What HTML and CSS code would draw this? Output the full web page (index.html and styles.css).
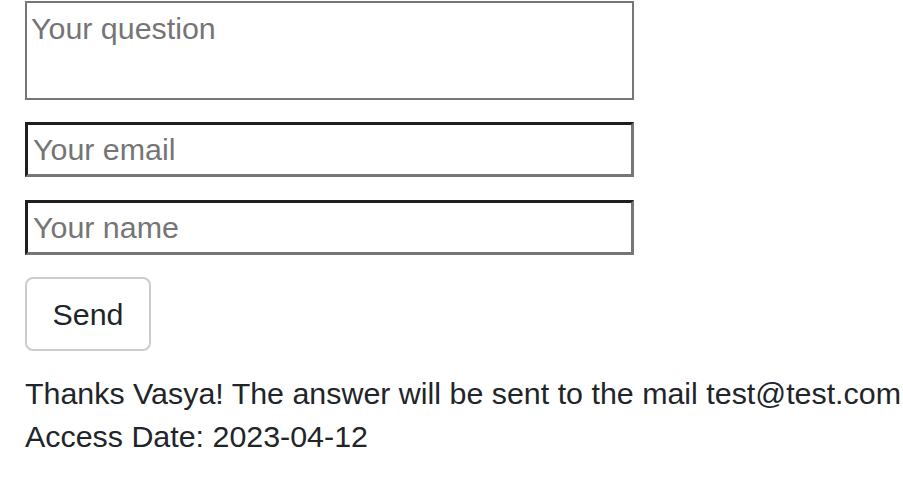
FILE: index.html
```html
<!DOCTYPE html>
<html>
<head>
<meta charset="utf-8">
<link rel="stylesheet" href="styles.css">
</head>
<body>
<form class="form">
  <textarea class="question" placeholder="Your question"></textarea>
  <input class="field" type="text" placeholder="Your email">
  <input class="field" type="text" placeholder="Your name">
  <button class="send" type="button">Send</button>
</form>
<div class="result">
  <div>Thanks Vasya! The answer will be sent to the mail test@test.com</div>
  <div>Access Date: 2023-04-12</div>
</div>
</body>
</html>
```
FILE: styles.css
```css
html, body {
  margin: 0;
  padding: 0;
  background: #fff;
}
body {
  padding: 1px 0 0 25px;
  font-family: "Liberation Sans", Arial, sans-serif;
  color: #212529;
}
.form {
  display: flex;
  flex-direction: column;
  align-items: flex-start;
}
.question {
  box-sizing: border-box;
  width: 609px;
  height: 99px;
  margin: 0;
  border: 2px solid #767676;
  padding: 8px 4px 4px;
  font-family: "Liberation Sans", Arial, sans-serif;
  font-size: 30.4px;
  resize: none;
  outline: none;
}
.field {
  box-sizing: border-box;
  width: 609px;
  height: 55px;
  margin: 0;
  border-width: 3px;
  border-style: solid;
  border-color: #1f1f1f #767676 #767676 #1f1f1f;
  padding: 0 5px 1px;
  font-family: "Liberation Sans", Arial, sans-serif;
  font-size: 30.4px;
  outline: none;
}
.question + .field { margin-top: 22px; }
.field + .field { margin-top: 23px; }
.question::placeholder,
.field::placeholder {
  color: #757575;
}
.send {
  box-sizing: border-box;
  margin-top: 22px;
  width: 126px;
  height: 74px;
  border: 2px solid #cccccc;
  border-radius: 8px;
  background: #fff;
  font-family: "Liberation Sans", Arial, sans-serif;
  font-size: 30.4px;
  color: #212529;
}
.result {
  margin-top: 21px;
  font-size: 30.4px;
  line-height: 43px;
  color: #212529;
}
```
